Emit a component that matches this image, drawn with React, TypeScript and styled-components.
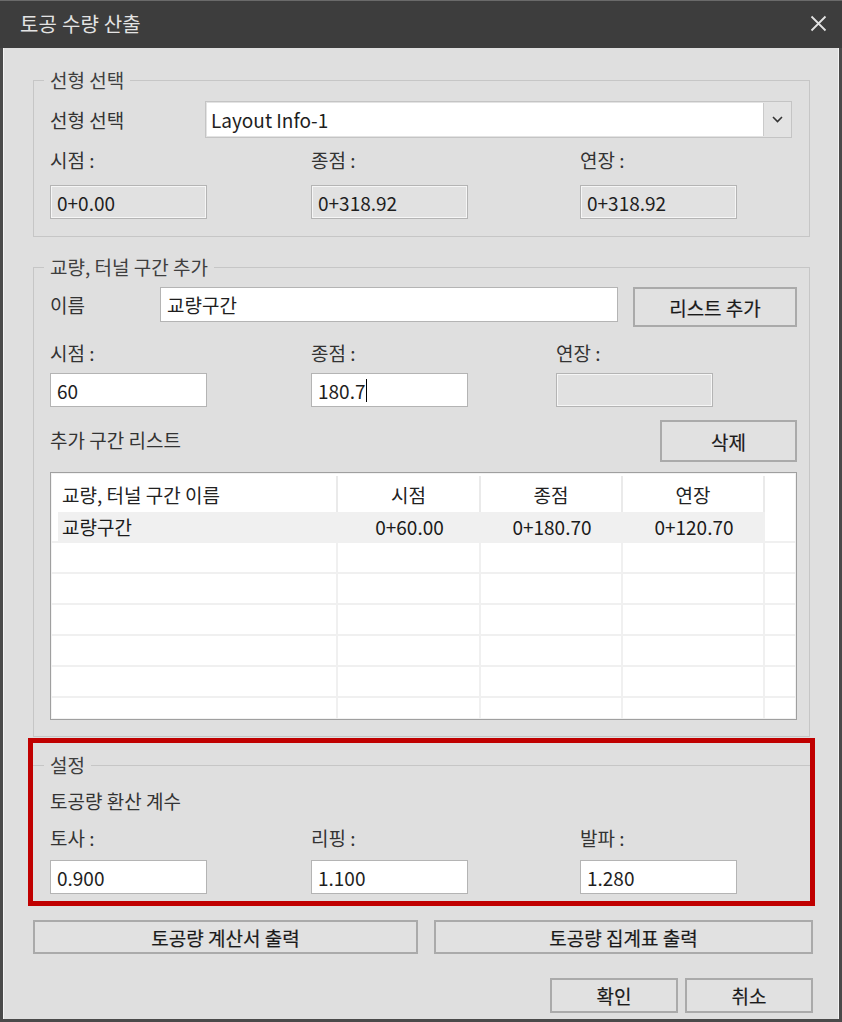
import React from "react";
import styled, { createGlobalStyle } from "styled-components";

const Global = createGlobalStyle`
  html, body { margin: 0; padding: 0; background: #dfdfdf; }
  body { font-family: "Noto Sans CJK KR", "Noto Sans", sans-serif; }
  * { box-sizing: border-box; }
`;

const FONT = `"Noto Sans CJK KR", "Noto Sans", sans-serif`;

const Window = styled.div`
  width: 842px;
  height: 1022px;
  display: flex;
  flex-direction: column;
  background: #4a4a4a;
  font-family: ${FONT};
  font-size: 19px;
  color: #333;
`;

const TitleBar = styled.div`
  height: 48px;
  flex: none;
  display: flex;
  align-items: center;
  justify-content: space-between;
  padding: 0 14px 2px 20px;
  background: #3d3d3d;
  border-top: 1px solid #6a6a6a;
`;

const Title = styled.div`
  color: #e4e4e4;
  font-size: 20px;
  letter-spacing: 0.2px;
`;

const CloseButton = styled.div`
  width: 20px;
  height: 20px;
  display: flex;
  align-items: center;
  justify-content: center;
`;

const Body = styled.div`
  flex: 1;
  margin: 0 3px 3px 3px;
  padding: 20px 29px 0 30px;
  background: #dfdfdf;
  box-shadow: inset 1px 0 #f4f4f4, inset -1px 0 #f4f4f4;
  display: flex;
  flex-direction: column;
`;

const Group = styled.fieldset<{ $pb: number; $pr: number; $mt?: number }>`
  margin: ${(p) => p.$mt ?? 0}px 0 0 0;
  padding: 0 ${(p) => p.$pr}px ${(p) => p.$pb}px 16px;
  border: 1px solid #c6c6c6;
  min-width: 0;
  display: flex;
  flex-direction: column;
`;

const TopOnlyGroup = styled.fieldset`
  margin: 0;
  padding: 0 0 7px 17px;
  border: none;
  border-top: 1px solid #c6c6c6;
  min-width: 0;
  display: flex;
  flex-direction: column;
`;

const Legend = styled.legend`
  margin-left: -6px;
  padding: 0 6px;
  font-size: 19px;
  line-height: 24px;
  color: #3e3e3e;
`;

const Highlight = styled.div`
  margin: 1px -5px 0 -5px;
  padding-top: 10px;
  border: 5px solid #c00000;
`;

const Row = styled.div<{ $mt: number; $h: number }>`
  margin-top: ${(p) => p.$mt}px;
  height: ${(p) => p.$h}px;
  display: flex;
  align-items: flex-start;
`;

const Label = styled.div<{ $w?: number; $lh?: number; $mt?: number }>`
  width: ${(p) => (p.$w ? `${p.$w}px` : "auto")};
  margin-top: ${(p) => p.$mt ?? 0}px;
  flex: none;
  line-height: ${(p) => p.$lh ?? 24}px;
  color: #333;
  white-space: nowrap;
`;

const Triple = styled.div<{ $cols: string; $mt: number; $h: number }>`
  margin-top: ${(p) => p.$mt}px;
  height: ${(p) => p.$h}px;
  display: grid;
  grid-template-columns: ${(p) => p.$cols};
  align-items: start;
`;

const TextBox = styled.div<{ $readonly?: boolean; $w?: number; $h?: number }>`
  width: ${(p) => (p.$w ? `${p.$w}px` : "157px")};
  height: ${(p) => p.$h ?? 34}px;
  padding: 0 6px;
  display: flex;
  align-items: center;
  border: 1px solid #b4b4b4;
  background: ${(p) => (p.$readonly ? "#e1e1e1" : "#ffffff")};
  box-shadow: inset 0 0 0 1px ${(p) => (p.$readonly ? "#f6f6f6" : "#ffffff")};
  color: #1e1e1e;
  font-size: 19px;
  white-space: nowrap;
`;

const Caret = styled.span`
  display: inline-block;
  width: 1px;
  height: 23px;
  margin-left: 1px;
  background: #000;
`;

const Combo = styled.div`
  flex: 1;
  height: 37px;
  display: flex;
  border: 1px solid #c4c4c4;
  background: #e3e3e3;
  padding: 1px 0 1px 1px;
`;

const ComboField = styled.div`
  flex: 1;
  background: #fff;
  padding-left: 4px;
  display: flex;
  align-items: center;
  color: #1e1e1e;
  font-size: 19px;
`;

const ComboArrow = styled.div`
  width: 28px;
  flex: none;
  display: flex;
  align-items: center;
  justify-content: center;
  border-left: 1px solid #cacaca;
`;

const Button = styled.button<{ $w?: number; $h: number }>`
  width: ${(p) => (p.$w ? `${p.$w}px` : "auto")};
  height: ${(p) => p.$h}px;
  flex: none;
  margin: 0;
  padding: 0;
  border: 2px solid #aaaaaa;
  background: #e1e1e1;
  font-family: ${FONT};
  font-size: 19px;
  font-weight: 400;
  -webkit-text-stroke: 0.2px #1a1a1a;
  color: #1a1a1a;
`;

const Spacer = styled.div`
  flex: 1;
`;

const Table = styled.div`
  margin-top: 10px;
  height: 248px;
  border: 1px solid #9f9f9f;
  box-shadow: inset 0 0 0 1px #f2f2f2;
  background: #fff;
  overflow: hidden;
`;

const TRow = styled.div<{ $h: number; $lined?: boolean }>`
  display: grid;
  grid-template-columns: 287px 143px 142px 142px 1fr;
  height: ${(p) => p.$h}px;
  border-bottom: ${(p) => (p.$lined ? "2px solid #f0f0f0" : "none")};
`;

const HeadCell = styled.div<{ $left?: boolean; $sep?: boolean }>`
  display: flex;
  align-items: center;
  justify-content: ${(p) => (p.$left ? "flex-start" : "center")};
  padding-left: ${(p) => (p.$left ? 11 : 0)}px;
  border-right: ${(p) => (p.$sep ? "2px solid #eaeaea" : "none")};
  margin-top: 3px;
  color: #222;
  font-size: 19px;
`;

const DataCell = styled.div<{ $left?: boolean; $fill?: boolean }>`
  display: flex;
  align-items: center;
  justify-content: ${(p) => (p.$left ? "flex-start" : "center")};
  padding-left: ${(p) => (p.$left ? 11 : 0)}px;
  background: ${(p) =>
    p.$fill
      ? p.$left
        ? "linear-gradient(to right, transparent 7px, #f0f0f0 7px)"
        : "#f0f0f0"
      : "transparent"};
  color: #1a1a1a;
  font-size: 19px;
`;

const GridCell = styled.div<{ $sep?: boolean }>`
  border-right: ${(p) => (p.$sep ? "2px solid #f0f0f0" : "none")};
`;

const ButtonRow = styled.div<{ $mt: number; $cols: string; $gap: number; $end?: boolean }>`
  margin: ${(p) => p.$mt}px -3px 0 0;
  display: grid;
  grid-template-columns: ${(p) => p.$cols};
  column-gap: ${(p) => p.$gap}px;
  justify-content: ${(p) => (p.$end ? "end" : "start")};
`;

const CloseIcon = () => (
  <svg width="17" height="17" viewBox="0 0 17 17">
    <path d="M1.5 1.5 L15.5 15.5 M15.5 1.5 L1.5 15.5" stroke="#e2e2e2" strokeWidth="1.8" fill="none" />
  </svg>
);

const Chevron = () => (
  <svg width="11" height="7" viewBox="0 0 11 7">
    <polyline points="1,1 5.5,5.5 10,1" stroke="#333" strokeWidth="1.6" fill="none" />
  </svg>
);

const emptyRows = [0, 1, 2, 3, 4, 5];

export default function App() {
  return (
    <>
      <Global />
      <Window>
        <TitleBar>
          <Title>토공 수량 산출</Title>
          <CloseButton>
            <CloseIcon />
          </CloseButton>
        </TitleBar>
        <Body>
          <Group $pb={17} $pr={17}>
            <Legend>선형 선택</Legend>
            <Row $mt={9} $h={37}>
              <Label $w={155} $lh={37}>선형 선택</Label>
              <Combo>
                <ComboField>Layout Info-1</ComboField>
                <ComboArrow>
                  <Chevron />
                </ComboArrow>
              </Combo>
            </Row>
            <Triple $cols="261px 269px 157px" $mt={10} $h={24}>
              <Label>시점 :</Label>
              <Label>종점 :</Label>
              <Label>연장 :</Label>
            </Triple>
            <Triple $cols="261px 269px 157px" $mt={13} $h={34}>
              <TextBox $readonly>0+0.00</TextBox>
              <TextBox $readonly>0+318.92</TextBox>
              <TextBox $readonly>0+318.92</TextBox>
            </Triple>
          </Group>

          <Group $pb={16} $pr={12} $mt={18}>
            <Legend>교량, 터널 구간 추가</Legend>
            <Row $mt={8} $h={40}>
              <Label $w={110} $lh={35}>이름</Label>
              <TextBox $w={458} $h={35}>교량구간</TextBox>
              <Spacer />
              <Button $w={164} $h={40}>리스트 추가</Button>
            </Row>
            <Triple $cols="261px 245px 157px" $mt={14} $h={24}>
              <Label>시점 :</Label>
              <Label>종점 :</Label>
              <Label>연장 :</Label>
            </Triple>
            <Triple $cols="261px 245px 157px" $mt={8} $h={34}>
              <TextBox>60</TextBox>
              <TextBox>
                180.7
                <Caret />
              </TextBox>
              <TextBox $readonly />
            </Triple>
            <Row $mt={13} $h={42}>
              <Label $lh={40}>추가 구간 리스트</Label>
              <Spacer />
              <Button $w={137} $h={42}>삭제</Button>
            </Row>
            <Table>
              <TRow $h={39}>
                <HeadCell $left $sep>교량, 터널 구간 이름</HeadCell>
                <HeadCell $sep>시점</HeadCell>
                <HeadCell $sep>종점</HeadCell>
                <HeadCell $sep>연장</HeadCell>
                <HeadCell />
              </TRow>
              <TRow $h={31} $lined>
                <DataCell $left $fill>교량구간</DataCell>
                <DataCell $fill>0+60.00</DataCell>
                <DataCell $fill>0+180.70</DataCell>
                <DataCell $fill>0+120.70</DataCell>
                <DataCell />
              </TRow>
              {emptyRows.map((r) => (
                <TRow key={r} $h={31} $lined>
                  <GridCell $sep />
                  <GridCell $sep />
                  <GridCell $sep />
                  <GridCell $sep />
                  <GridCell />
                </TRow>
              ))}
            </Table>
          </Group>

          <Highlight>
            <TopOnlyGroup>
              <Legend>설정</Legend>
              <Label $mt={12}>토공량 환산 계수</Label>
              <Triple $cols="261px 269px 157px" $mt={13} $h={24}>
                <Label>토사 :</Label>
                <Label>리핑 :</Label>
                <Label>발파 :</Label>
              </Triple>
              <Triple $cols="261px 269px 157px" $mt={10} $h={34}>
                <TextBox>0.900</TextBox>
                <TextBox>1.100</TextBox>
                <TextBox>1.280</TextBox>
              </Triple>
            </TopOnlyGroup>
          </Highlight>

          <ButtonRow $mt={14} $cols="385px 379px" $gap={16}>
            <Button $h={34}>토공량 계산서 출력</Button>
            <Button $h={34}>토공량 집계표 출력</Button>
          </ButtonRow>
          <ButtonRow $mt={24} $cols="128px 128px" $gap={7} $end>
            <Button $h={35}>확인</Button>
            <Button $h={35}>취소</Button>
          </ButtonRow>
        </Body>
      </Window>
    </>
  );
}
